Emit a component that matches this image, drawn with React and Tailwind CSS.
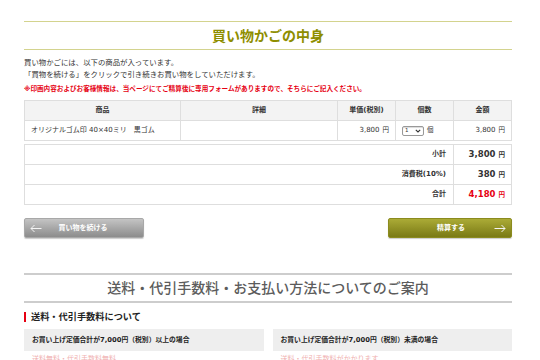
import React from "react";

const jp = { fontFamily: '"DejaVu Sans", "Noto Sans CJK JP", sans-serif' };

function ArrowLeft() {
    return (
        <svg width="12" height="9" viewBox="0 0 12 9" fill="none" stroke="#f4f4f4" strokeWidth="1">
            <path d="M11.5 4.5H1M4.5 1L1 4.5L4.5 8" />
        </svg>
    );
}

function ArrowRight() {
    return (
        <svg width="12" height="9" viewBox="0 0 12 9" fill="none" stroke="#f4f4f4" strokeWidth="1">
            <path d="M0.5 4.5H11M7.5 1L11 4.5L7.5 8" />
        </svg>
    );
}

function Yen({ red }) {
    return <span className={`ml-[3px] text-[6.5px] ${red ? "text-[#e60012]" : "text-[#333]"}`}>円</span>;
}

export default function App() {
    // summary rows under the cart table
    const totals = [
        { label: "小計", value: "3,800" },
        { label: "消費税(10%)", value: "380" },
        { label: "合計", value: "4,180", red: true },
    ];

    return (
        <div className="w-[540px] h-[360px] overflow-hidden bg-white pl-[24px] pr-[28px] pt-[21px] text-[#333]" style={jp}>
            {/* Page title */}
            <div className="h-[29px] border-y border-[#d3d38e] flex items-center justify-center">
                <h1 className="text-[14px] font-bold text-[#8e8e00] leading-none">買い物かごの中身</h1>
            </div>

            <div className="mt-[7px] text-[7.4px] leading-[12px] text-[#333]">
                <p>買い物かごには、以下の商品が入っています。</p>
                <p>「買物を続ける」をクリックで引き続きお買い物をしていただけます。</p>
                <p className="mt-[2px] text-[6.6px] font-bold text-[#e60012]">
                    ※印画内容およびお客様情報は、当ページにてご精算後に専用フォームがありますので、そちらにご記入ください。
                </p>
            </div>

            {/* Cart table */}
            <table className="mt-[5px] w-full border-collapse text-[7px]">
                <thead>
                    <tr className="h-[20px] bg-[#f3f3f3] font-bold">
                        <th className="w-[156px] border border-[#dedede]">商品</th>
                        <th className="w-[157px] border border-[#dedede]">詳細</th>
                        <th className="w-[58px] border border-[#dedede]">単価(税別)</th>
                        <th className="w-[58px] border border-[#dedede]">個数</th>
                        <th className="border border-[#dedede]">金額</th>
                    </tr>
                </thead>
                <tbody>
                    <tr className="h-[20px]">
                        <td className="border border-[#dedede] px-[6px]">オリジナルゴム印 40×40ミリ　黒ゴム</td>
                        <td className="border border-[#dedede]"></td>
                        <td className="border border-[#dedede] px-[6px] text-right">
                            3,800<Yen />
                        </td>
                        <td className="border border-[#dedede] px-[6px]">
                            <div className="flex items-center gap-[3px]">
                                <div className="w-[22px] h-[10px] border border-[#999] rounded-[2px] bg-white flex items-center justify-between px-[2px] shadow-[inset_0_1px_1px_rgba(0,0,0,0.15)]">
                                    <span className="text-[5.5px] leading-none">1</span>
                                    <svg width="6" height="4" viewBox="0 0 6 4" fill="none" stroke="#333" strokeWidth="1.1">
                                        <path d="M0.8 0.8L3 3L5.2 0.8" />
                                    </svg>
                                </div>
                                <span className="text-[6.5px]">個</span>
                            </div>
                        </td>
                        <td className="border border-[#dedede] px-[6px] text-right">
                            3,800<Yen />
                        </td>
                    </tr>
                </tbody>
            </table>

            <table className="mt-[3px] w-full border-collapse text-[7.5px] font-bold">
                <tbody>
                    {totals.map((row) => (
                        <tr key={row.label} className="h-[20px]">
                            <td className="border border-[#dedede] px-[7px] text-right text-[7px]">{row.label}</td>
                            <td className={`w-[58px] border border-[#dedede] px-[6px] text-right text-[8.5px] ${row.red ? "text-[#e60012]" : ""}`}>
                                {row.value}
                                <Yen red={row.red} />
                            </td>
                        </tr>
                    ))}
                </tbody>
            </table>

            {/* Buttons */}
            <div className="mt-[13px] flex justify-between">
                <button
                    type="button"
                    className="w-[120px] h-[20px] rounded-[2px] border border-[#a8a8a8] bg-gradient-to-b from-[#c4c4c4] to-[#8c8c8c] shadow-[0_1px_1px_rgba(0,0,0,0.2)] flex items-center px-[5px] text-white text-[7px] font-bold"
                >
                    <ArrowLeft />
                    <span className="flex-1 text-center pr-[14px]">買い物を続ける</span>
                </button>
                <button
                    type="button"
                    className="w-[124px] h-[20px] rounded-[2px] border border-[#8b8b1e] bg-gradient-to-b from-[#abab36] to-[#7a7a14] shadow-[0_1px_1px_rgba(0,0,0,0.2)] flex items-center px-[5px] text-white text-[7px] font-bold"
                >
                    <span className="flex-1 text-center pl-[14px]">精算する</span>
                    <ArrowRight />
                </button>
            </div>

            {/* Shipping info section */}
            <div className="mt-[35px] h-[30px] border-y-2 border-[#cdcdcd] flex items-center justify-center">
                <h2 className="text-[14px] font-medium text-[#5c5c5c] leading-none">送料・代引手数料・お支払い方法についてのご案内</h2>
            </div>

            <h3 className="mt-[9px] flex items-center gap-[5px] text-[9.2px] font-bold text-[#222] leading-none">
                <span className="w-[2px] h-[10px] bg-[#e60012]"></span>
                送料・代引手数料について
            </h3>

            <div className="mt-[7px] grid grid-cols-2 gap-[9px]">
                <div>
                    <div className="h-[22px] bg-[#eeeeee] flex items-center px-[8px] text-[6.8px] font-bold text-[#222]">
                        お買い上げ定価合計が7,000円（税別）以上の場合
                    </div>
                    <p className="mt-[3px] px-[8px] text-[7px] text-[#f0b0b0]">送料無料・代引手数料無料</p>
                </div>
                <div>
                    <div className="h-[22px] bg-[#eeeeee] flex items-center px-[8px] text-[6.8px] font-bold text-[#222]">
                        お買い上げ定価合計が7,000円（税別）未満の場合
                    </div>
                    <p className="mt-[3px] px-[8px] text-[7px] text-[#f0b0b0]">送料・代引手数料がかかります</p>
                </div>
            </div>
        </div>
    );
}
